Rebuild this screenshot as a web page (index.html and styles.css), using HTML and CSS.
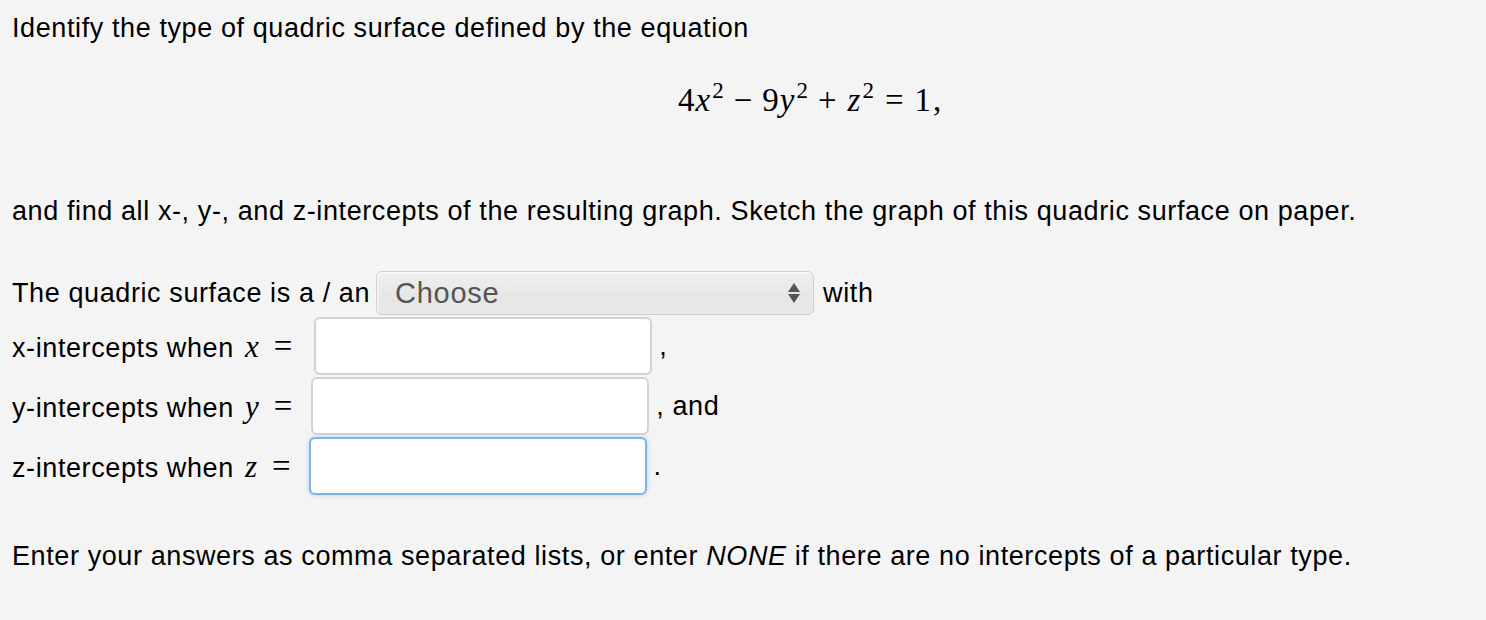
FILE: index.html
```html
<!DOCTYPE html>
<html>
<head>
<meta charset="utf-8">
<link rel="stylesheet" href="styles.css">
</head>
<body>
<div class="page">
  <p class="line first">Identify the type of quadric surface defined by the equation</p>
  <div class="eq">
    <span class="num">4</span><span class="var">x</span><sup>2</sup><span class="op">−</span><span class="num">9</span><span class="var">y</span><sup>2</sup><span class="op">+</span><span class="var">z</span><sup>2</sup><span class="rel">=</span><span class="num">1</span><span class="num comma">,</span>
  </div>
  <p class="line second">and find all x-, y-, and z-intercepts of the resulting graph. Sketch the graph of this quadric surface on paper.</p>
  <div class="form">
    <div class="row sel-row">
      <span>The quadric surface is a / an</span>
      <div class="select">
        <span class="sel-text">Choose</span>
        <svg class="arrows" width="14" height="22" viewBox="0 0 14 22"><path d="M7 1 L13 10 H1 Z" fill="#555"/><path d="M7 21 L13 12 H1 Z" fill="#555"/></svg>
      </div>
      <span class="after">with</span>
    </div>
    <div class="row inp-row">
      <span>x-intercepts when <span class="mvar">x</span><span class="meq">=</span></span>
      <div class="input x"></div>
      <span class="after tail">,</span>
    </div>
    <div class="row inp-row">
      <span>y-intercepts when <span class="mvar">y</span><span class="meq">=</span></span>
      <div class="input y"></div>
      <span class="after tail">, and</span>
    </div>
    <div class="row inp-row">
      <span>z-intercepts when <span class="mvar">z</span><span class="meq">=</span></span>
      <div class="input z focus"></div>
      <span class="after tail">.</span>
    </div>
  </div>
  <p class="line last">Enter your answers as comma separated lists, or enter <em>NONE</em> if there are no intercepts of a particular type.</p>
</div>
</body>
</html>
```
FILE: styles.css
```css
html, body {
  margin: 0;
  padding: 0;
  background: #f4f4f4;
}
.page {
  padding: 13px 0 0 12px;
  font-family: "Liberation Sans", Arial, sans-serif;
  font-size: 27px;
  letter-spacing: 0.6px;
  color: #000;
}
.line {
  margin: 0;
  line-height: 30px;
}
.eq {
  margin-top: 37px;
  height: 40px;
  line-height: 40px;
  padding-left: 666px;
  font-family: "Liberation Serif", "DejaVu Serif", serif;
  font-size: 33px;
  letter-spacing: 0;
  white-space: nowrap;
}
.eq .var {
  font-style: italic;
  margin-left: 1px;
}
.eq sup {
  font-size: 23px;
  vertical-align: 13px;
  line-height: 0;
  margin-left: 2px;
}
.eq .op {
  margin: 0 10px;
}
.eq .rel {
  margin: 0 11px;
}
.eq .comma {
  margin-left: 2px;
}
.second {
  margin-top: 76px;
}
.form {
  margin-top: 45px;
  display: flex;
  flex-direction: column;
  gap: 2px;
}
.row {
  display: flex;
  align-items: center;
  white-space: nowrap;
}
.sel-row {
  height: 44px;
}
.select {
  margin-left: 6px;
  border: 1px solid #cfcfcf;
  border-radius: 6px;
  background: linear-gradient(#efefef, #e6e6e6 60%, #e9e9e9);
  box-shadow: inset 1px 1px 2px rgba(255,255,255,0.9);
  display: flex;
  align-items: center;
  justify-content: space-between;
  padding: 0 12px 0 18px;
  box-sizing: border-box;
  width: 438px;
  height: 44px;
}
.sel-text {
  color: #555;
  font-size: 29px;
  letter-spacing: 0.7px;
}
.arrows {
  display: block;
}
.sel-row .after {
  margin-left: 9px;
}
.inp-row {
  height: 58px;
}
.mvar {
  font-family: "Liberation Serif", "DejaVu Serif", serif;
  font-style: italic;
  font-size: 31px;
  letter-spacing: 0;
  margin-left: 3px;
}
.meq {
  font-family: "Liberation Serif", "DejaVu Serif", serif;
  font-size: 33px;
  letter-spacing: 0;
  margin-left: 15px;
}
.input {
  width: 338px;
  height: 58px;
  box-sizing: border-box;
  background: #fff;
  border: 2px solid #d3d3d3;
  border-radius: 6px;
}
.input.x { margin-left: 22px; }
.input.y { margin-left: 19px; }
.input.z { margin-left: 18px; }
.input.focus {
  border-color: #7eb4ea;
  box-shadow: 0 0 4px rgba(126,180,234,0.6);
}
.tail {
  margin-left: 7px;
}
.last {
  margin-top: 46px;
}
```
